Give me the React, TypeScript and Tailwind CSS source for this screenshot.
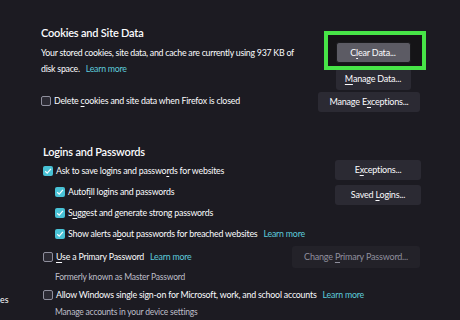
import React from "react";

const font = { fontFamily: "Lato, 'Open Sans', sans-serif" };

const U = ({ children }: { children: React.ReactNode }) => (
  <span className="underline underline-offset-[2px]">{children}</span>
);

const Check = ({ checked }: { checked: boolean }) =>
  checked ? (
    <span className="w-[10px] h-[10px] rounded-[2px] bg-[#48c2d6] flex items-center justify-center shrink-0">
      <svg width="8" height="8" viewBox="0 0 8 8">
        <path d="M1.2 4.2 L3.2 6.1 L6.9 1.8" stroke="#f4fbfd" strokeWidth="1.3" fill="none" />
      </svg>
    </span>
  ) : (
    <span className="w-[10px] h-[10px] rounded-[2px] border border-[#8f8f9d] bg-[#2b2a33] shrink-0" />
  );

const Btn = ({
  children,
  className = "",
}: {
  children: React.ReactNode;
  className?: string;
}) => (
  <button
    className={`flex items-center justify-center rounded-[3px] bg-[#2b2a33] text-[9px] tracking-[-0.2px] text-[#fbfbfe] whitespace-nowrap ${className}`}
  >
    {children}
  </button>
);

const LearnMore = () => <span className="text-[#5ccbdc] ml-[6px]">Learn more</span>;

const Row = ({
  checked,
  indent = false,
  className = "",
  children,
}: {
  checked: boolean;
  indent?: boolean;
  className?: string;
  children: React.ReactNode;
}) => (
  <label
    className={`flex items-center gap-[3px] text-[8.8px] tracking-[-0.2px] whitespace-nowrap ${
      indent ? "pl-[12px]" : ""
    } ${className}`}
  >
    <Check checked={checked} />
    <span>{children}</span>
  </label>
);

export default function App() {
  return (
    <div
      className="w-[460px] h-[320px] bg-[#1c1b22] text-[#fbfbfe] overflow-hidden flex"
      style={font}
    >
      {/* sidebar edge */}
      <div className="w-[40px] shrink-0 text-[8.8px] leading-[12px] pt-[294px]">es</div>

      <div className="flex-1 pr-[40px]">
        {/* Cookies and Site Data */}
        <div className="pt-[26px] pl-[1px]">
          <h2 className="text-[11px] leading-[14px] font-semibold tracking-[-0.2px]">
            Cookies and Site Data
          </h2>
          <div className="flex justify-between mt-[2px]">
            <p className="text-[8.8px] tracking-[-0.25px] leading-[16px] pt-[3px] whitespace-nowrap">
              Your stored cookies, site data, and cache are currently using 937 KB of
              <br />
              disk space.
              <LearnMore />
            </p>
            <div className="flex flex-col items-center w-[110px] -mr-[8px] shrink-0">
              <div className="relative">
                <div className="absolute -top-[11px] -left-[12px] -right-[15px] -bottom-[7px] border-[4px] border-[#47e447] bg-[#151417]" />
                <Btn className="relative w-[75px] h-[21px] !bg-[#5c5b64] border border-[#1a1a1d]">
                  <span>
                    C<U>l</U>ear Data...
                  </span>
                </Btn>
              </div>
              <Btn className="w-[75px] h-[22px] mt-[5px]">
                <span>
                  <U>M</U>anage Data...
                </span>
              </Btn>
            </div>
          </div>
          <div className="flex justify-between items-start mt-[2px]">
            <Row checked={false} className="mt-[2px]">
              Delete <U>c</U>ookies and site data when Firefox is closed
            </Row>
            <Btn className="w-[102px] h-[20px]">
              <span>
                Manage E<U>x</U>ceptions...
              </span>
            </Btn>
          </div>
        </div>

        {/* Logins and Passwords */}
        <div className="pt-[33px] pl-[3px]">
          <h2 className="text-[11px] leading-[14px] font-semibold tracking-[-0.2px]">
            Logins and Passwords
          </h2>
          <div className="flex justify-between mt-[1px]">
            <div className="flex flex-col">
              <Row checked className="h-[21px]">
                Ask to save logins and passwo<U>r</U>ds for websites
              </Row>
              <Row checked indent className="h-[21px]">
                Autof<U>i</U>ll logins and passwords
              </Row>
              <Row checked indent className="h-[21px]">
                S<U>u</U>ggest and generate strong passwords
              </Row>
              <Row checked indent className="h-[22px]">
                Show alerts a<U>b</U>out passwords for breached websites
                <LearnMore />
              </Row>
            </div>
            <div className="flex flex-col gap-[5px] -mr-[1px]">
              <Btn className="w-[86px] h-[20px]">
                <span>
                  E<U>x</U>ceptions...
                </span>
              </Btn>
              <Btn className="w-[86px] h-[20px]">
                <span>
                  Saved <U>L</U>ogins...
                </span>
              </Btn>
            </div>
          </div>
          <div className="flex justify-between items-center h-[22px] mt-[1px]">
            <Row checked={false}>
              <U>U</U>se a Primary Password
              <LearnMore />
            </Row>
            <Btn className="w-[128px] h-[22px] !bg-[#232229] !text-[#8f8f9d]">
              <span>
                Change <U>P</U>rimary Password...
              </span>
            </Btn>
          </div>
          <p className="h-[19px] flex items-center pl-[12px] text-[8.5px] tracking-[-0.2px] text-[#bfbfc9]">
            Formerly known as Master Password
          </p>
          <Row checked={false} className="h-[16px]">
            Allow Windows single sign-on for Microsoft, work, and school accounts
            <LearnMore />
          </Row>
          <p className="h-[18px] flex items-center pl-[12px] text-[8.5px] tracking-[-0.2px] text-[#bfbfc9]">
            Manage accounts in your device settings
          </p>
        </div>
      </div>
    </div>
  );
}
